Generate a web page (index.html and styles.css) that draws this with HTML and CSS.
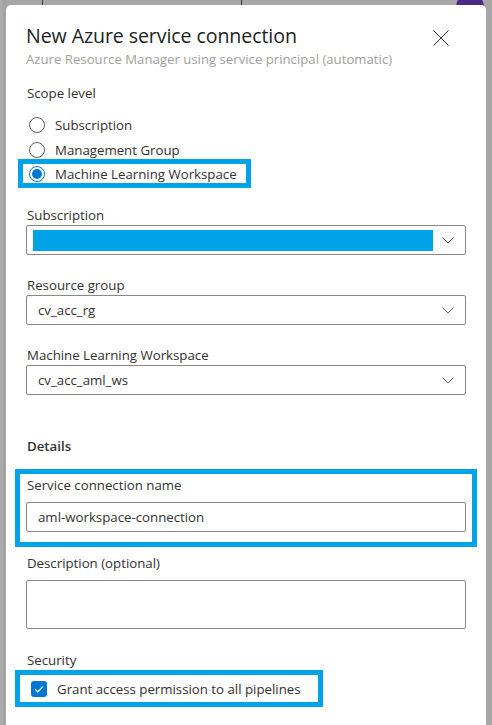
FILE: index.html
```html
<!DOCTYPE html>
<html lang="en">
<head>
<meta charset="utf-8">
<title>New Azure service connection</title>
<link rel="stylesheet" href="styles.css">
</head>
<body>
<div class="backdrop">
  <div class="topbar">
    <div class="tb-seg tb-seg1"></div>
    <div class="tb-seg tb-seg2"></div>
    <div class="tb-seg tb-seg3"></div>
    <span class="avatar"></span>
  </div>
  <div class="dialog">
    <div class="dialog-head">
      <div class="titles">
        <h1 class="title">New Azure service connection</h1>
        <p class="subtitle">Azure Resource Manager using service principal (automatic)</p>
      </div>
      <button class="close" type="button" aria-label="Close">
        <svg width="16" height="16" viewBox="0 0 16 16"><path d="M0.5 0.5 L15.5 15.5 M15.5 0.5 L0.5 15.5" stroke="#323130" stroke-width="1" fill="none"/></svg>
      </button>
    </div>
    <div class="dialog-body">
      <div class="group-label">Scope level</div>
      <div class="radios">
        <div class="radio"><span class="radio-circle"></span><span>Subscription</span></div>
        <div class="radio"><span class="radio-circle"></span><span>Management Group</span></div>
        <div class="radio radio-checked mark-radio"><span class="radio-circle"></span><span>Machine Learning Workspace</span></div>
      </div>

      <div class="field field-first">
        <div class="label">Subscription</div>
        <div class="dropdown">
          <span class="redacted"></span>
          <svg class="chevron" width="12" height="7" viewBox="0 0 12 7"><path d="M0.5 0.5 L6 6 L11.5 0.5" stroke="#605e5c" stroke-width="1" fill="none"/></svg>
        </div>
      </div>

      <div class="field">
        <div class="label">Resource group</div>
        <div class="dropdown">
          <span class="value">cv_acc_rg</span>
          <svg class="chevron" width="12" height="7" viewBox="0 0 12 7"><path d="M0.5 0.5 L6 6 L11.5 0.5" stroke="#605e5c" stroke-width="1" fill="none"/></svg>
        </div>
      </div>

      <div class="field">
        <div class="label">Machine Learning Workspace</div>
        <div class="dropdown">
          <span class="value">cv_acc_aml_ws</span>
          <svg class="chevron" width="12" height="7" viewBox="0 0 12 7"><path d="M0.5 0.5 L6 6 L11.5 0.5" stroke="#605e5c" stroke-width="1" fill="none"/></svg>
        </div>
      </div>

      <div class="section-title">Details</div>

      <div class="text-field mark-name">
        <div class="label">Service connection name</div>
        <div class="textbox"><span class="value">aml-workspace-connection</span></div>
      </div>

      <div class="text-field text-field-desc">
        <div class="label">Description (optional)</div>
        <div class="textarea"></div>
      </div>

      <div class="group-label security">Security</div>
      <div class="checkbox mark-check">
        <span class="check-box">
          <svg width="16" height="16" viewBox="0 0 16 16"><path d="M4.2 8.3 L6.8 10.8 L11.8 5.6" stroke="#ffffff" stroke-width="1.2" fill="none"/></svg>
        </span>
        <span>Grant access permission to all pipelines</span>
      </div>
    </div>
  </div>
</div>
</body>
</html>
```
FILE: styles.css
```css
*, *::before, *::after { box-sizing: border-box; }
html, body {
  margin: 0;
  padding: 0;
  height: 725px;
  overflow: hidden;
  background: #a7a7a7;
}
body {
  font-family: "Open Sans", "Noto Sans", sans-serif;
  color: #323130;
}
.backdrop {
  position: relative;
  height: 725px;
  background: linear-gradient(to right, #ababab 0 3px, #a3a3a3 3px 6px, #a7a7a7 6px);
}
.topbar {
  display: flex;
  height: 5px;
}
.tb-seg1 { width: 43px; border-right: 1px solid #3c3c3c; }
.tb-seg2 { width: 199px; border-right: 1px solid #3c3c3c; }
.tb-seg3 { flex: 1; }
.avatar {
  position: absolute;
  left: 456px;
  top: -7px;
  width: 28px;
  height: 28px;
  border-radius: 50%;
  background: #4e2a84;
}
.dialog {
  position: relative;
  z-index: 1;
  margin-left: 6px;
  width: 480px;
  height: 740px;
  background: #ffffff;
  border-radius: 5px 5px 0 0;
  padding: 17px 20px 0 20px;
}
.dialog-head {
  display: flex;
  justify-content: space-between;
  align-items: flex-start;
}
.title {
  margin: 0;
  font-size: 19.6px;
  font-weight: 500;
  line-height: 28px;
  color: #201f1e;
  letter-spacing: -0.1px;
}
.subtitle {
  margin: 0;
  font-size: 13.2px;
  line-height: 18px;
  color: #a19f9d;
}
.close {
  border: 0;
  background: none;
  padding: 0;
  width: 16px;
  height: 16px;
  margin-top: 8px;
  margin-right: 17px;
  display: flex;
}
.dialog-body {
  font-size: 13.25px;
  line-height: 20px;
}
.group-label {
  margin-top: 15px;
  padding-left: 1px;
}
.radios {
  margin-top: 10px;
  display: flex;
  flex-direction: column;
}
.radio {
  position: relative;
  display: flex;
  align-items: center;
  height: 24.5px;
  padding-left: 3px;
}
.radio-circle {
  width: 16px;
  height: 16px;
  border: 1px solid #605e5c;
  border-radius: 50%;
  margin-right: 10px;
  display: flex;
  align-items: center;
  justify-content: center;
  flex: none;
}
.radio-checked .radio-circle {
  border-color: #0078d4;
}
.radio-checked .radio-circle::after {
  content: "";
  width: 10px;
  height: 10px;
  border-radius: 50%;
  background: #0078d4;
}
.mark-radio::after {
  content: "";
  position: absolute;
  left: -7.7px;
  top: -3px;
  bottom: -1.8px;
  width: 232.4px;
  border: 5px solid #00a2e8;
}
.field { margin-top: 20px; }
.field-first { margin-top: 18.5px; }
.label { padding-left: 1px; }
.dropdown {
  height: 30px;
  border: 1px solid #8a8886;
  border-radius: 2px;
  display: flex;
  align-items: center;
  justify-content: space-between;
  padding: 0 11px 0 11px;
}
.redacted {
  width: 400px;
  height: 21px;
  margin-left: -5px;
  background: #00a2e8;
}
.chevron { flex: none; }
.section-title {
  margin-top: 41px;
  font-weight: 600;
  padding-left: 1px;
}
.text-field { margin-top: 19px; position: relative; }
.text-field .label { margin-bottom: 7px; }
.text-field-desc { margin-top: 21px; }
.textbox {
  height: 30px;
  border: 1px solid #8a8886;
  border-radius: 2px;
  display: flex;
  align-items: center;
  padding: 0 11px;
}
.textarea {
  height: 49px;
  border: 1px solid #8a8886;
  border-radius: 2px;
}
.mark-name::after {
  content: "";
  position: absolute;
  left: -11px;
  right: -11px;
  top: -6px;
  bottom: -14.7px;
  border: 5px solid #00a2e8;
}
.security { margin-top: 21px; }
.checkbox {
  position: relative;
  margin-top: 9px;
  display: flex;
  align-items: center;
  height: 20px;
  padding-left: 5px;
}
.check-box {
  width: 16px;
  height: 16px;
  border-radius: 3px;
  background: #0078d4;
  margin-right: 10px;
  display: flex;
  flex: none;
}
.mark-check::after {
  content: "";
  position: absolute;
  left: -11px;
  top: -9px;
  bottom: -8px;
  width: 308px;
  border: 5px solid #00a2e8;
}
```
